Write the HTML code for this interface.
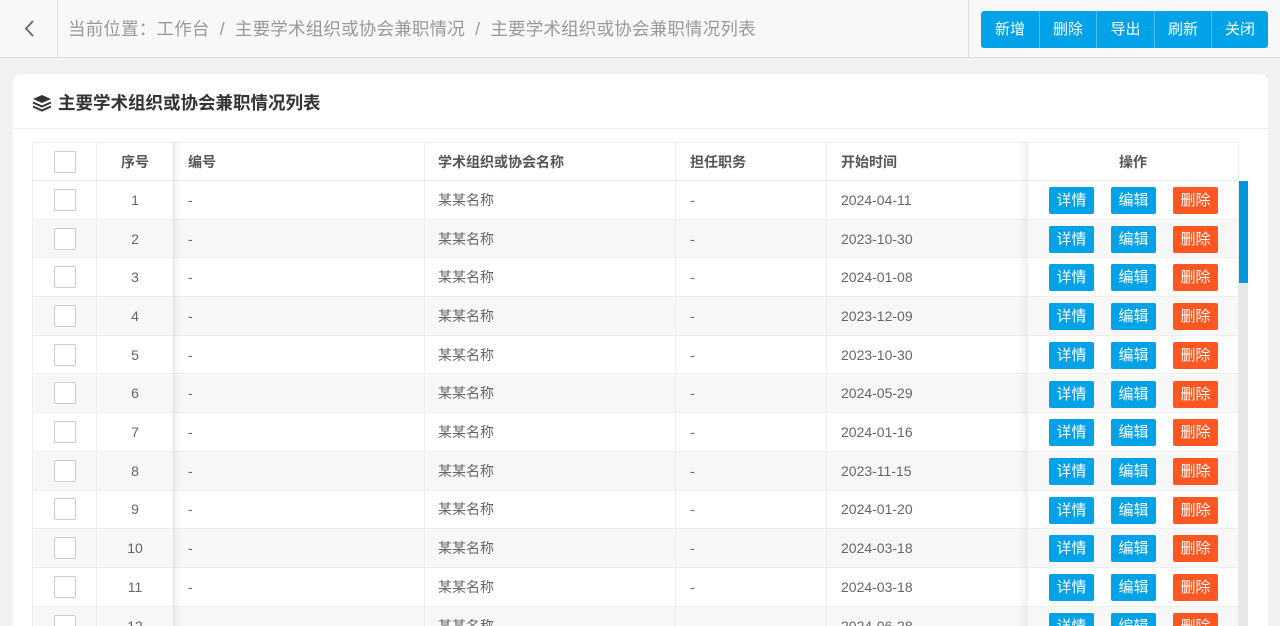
<!DOCTYPE html>
<html><head><meta charset="utf-8"><style>
*{box-sizing:border-box;margin:0;padding:0}
html{width:1280px;height:626px;overflow:hidden}
body{width:1280px;height:626px;overflow:hidden;background:#f2f2f2;font-family:"Liberation Sans","Noto Sans CJK SC",sans-serif;color:#666;font-size:14px;position:relative}
.top{position:absolute;left:0;top:0;width:1280px;height:58px;background:#f8f8f8;border-bottom:1px solid #ddd}
.back{position:absolute;left:0;top:0;width:58px;height:57px;border-right:1px solid #ddd}
.crumb{position:absolute;left:68px;top:16px;font-size:17.5px;color:#999;white-space:nowrap;letter-spacing:0.2px}
.rdiv{position:absolute;left:968px;top:0;width:1px;height:57px;background:#ddd}
.tbtns{position:absolute;left:981px;top:11px;height:37px;display:flex;border-radius:3px;overflow:hidden}
.tbtns div{background:#01a2e8;color:#fff;font-size:15px;line-height:37px;text-align:center;border-left:1px solid #4dbcf0}
.tbtns div:first-child{border-left:none}
.card{position:absolute;left:13px;top:74px;width:1255px;height:552px;background:#fff;border-radius:8px 8px 0 0}
.title{position:absolute;left:18px;top:16px;font-size:17.5px;font-weight:bold;color:#333;display:flex;align-items:center;gap:5px}
.hline{position:absolute;left:0;top:54px;width:1255px;height:1px;background:#eee}
.tbl{position:absolute;left:32px;top:142px;width:1216px;height:484px;overflow:hidden}
.row{position:absolute;left:0;width:1207px;height:38.64px;border-bottom:1px solid #eee;background:#fff}
.row.s{background:#f7f7f7}
.c{position:absolute;top:0;height:100%;border-left:1px solid #eee;display:flex;align-items:center;font-size:14px;color:#666}
.hd .c{font-weight:bold;color:#555}
.cb{width:22px;height:22px;border:1px solid #ccc;border-radius:2px;background:#fff}
.op{background:#fff}
.b{display:inline-block;width:45px;height:27px;line-height:27px;text-align:center;color:#fff;border-radius:2px;font-size:15px;background:#01a2e8;position:absolute;top:6px}
.b.r{background:#ff5722}
</style></head><body>
<div class="top">
 <div class="back"><svg width="58" height="57"><path d="M33 21 L26 28.5 L33 36" fill="none" stroke="#666" stroke-width="1.8"/></svg></div>
 <div class="crumb">当前位置：工作台 &nbsp;/&nbsp; 主要学术组织或协会兼职情况 &nbsp;/&nbsp; 主要学术组织或协会兼职情况列表</div>
 <div class="rdiv"></div>
 <div class="tbtns"><div style="width:58px">新增</div><div style="width:57px">删除</div><div style="width:58px">导出</div><div style="width:57px">刷新</div><div style="width:57px">关闭</div></div>
</div>
<div class="card">
 <div class="title"><svg width="22" height="20" viewBox="0 0 22 20"><path d="M11 2 L20 6 L11 10 L2 6Z" fill="#333"/><path d="M2 9.5 L11 13.5 L20 9.5" fill="none" stroke="#333" stroke-width="2"/><path d="M2 13.5 L11 17.5 L20 13.5" fill="none" stroke="#333" stroke-width="2"/></svg>主要学术组织或协会兼职情况列表</div>
 <div class="hline"></div>
</div>
<div class="tbl" id="t">
<div class="row hd" style="top:0;border-top:1px solid #eee;height:39px">
 <div class="c" style="left:0;width:64px;justify-content:center"><div class="cb"></div></div>
 <div class="c" style="left:64px;width:77px;justify-content:center">序号</div>
 <div class="c" style="left:141px;width:251px;padding-left:14px">编号</div>
 <div class="c" style="left:392px;width:251px;padding-left:13px">学术组织或协会名称</div>
 <div class="c" style="left:643px;width:151px;padding-left:14px">担任职务</div>
 <div class="c" style="left:794px;width:201px;padding-left:14px">开始时间</div>
 <div class="c op" style="left:995px;width:212px;justify-content:center;border-right:1px solid #eee">操作</div>
</div>
</div>
<div style="position:absolute;left:1238px;top:181px;width:10px;height:445px;background:#e8e8e8"></div>
<div style="position:absolute;left:1239px;top:181px;width:9px;height:102px;background:#0098dd"></div>
<div style="position:absolute;left:173px;top:142px;width:8px;height:484px;background:linear-gradient(to right,rgba(0,0,0,.05),rgba(0,0,0,0))"></div>
<div style="position:absolute;left:1019px;top:142px;width:8px;height:484px;background:linear-gradient(to left,rgba(0,0,0,.05),rgba(0,0,0,0))"></div>
<script>
var d=["2024-04-11","2023-10-30","2024-01-08","2023-12-09","2023-10-30","2024-05-29","2024-01-16","2023-11-15","2024-01-20","2024-03-18","2024-03-18","2024-06-28"];
var h="";
for(var i=0;i<12;i++){var ty=39+i*38.7;
h+='<div class="row'+(i%2?' s':'')+'" style="top:'+ty+'px">'+
'<div class="c" style="left:0;width:64px;justify-content:center"><div class="cb"></div></div>'+
'<div class="c" style="left:64px;width:77px;justify-content:center">'+(i+1)+'</div>'+
'<div class="c" style="left:141px;width:251px;padding-left:14px">-</div>'+
'<div class="c" style="left:392px;width:251px;padding-left:13px">某某名称</div>'+
'<div class="c" style="left:643px;width:151px;padding-left:14px">-</div>'+
'<div class="c" style="left:794px;width:201px;padding-left:14px">'+d[i]+'</div>'+
'<div class="c" style="left:995px;width:212px;border-right:1px solid #eee;background:inherit"><span class="b" style="left:21px">详情</span><span class="b" style="left:83px">编辑</span><span class="b r" style="left:145px">删除</span></div></div>';}
document.getElementById("t").insertAdjacentHTML("beforeend",h);
</script>
</body></html>
